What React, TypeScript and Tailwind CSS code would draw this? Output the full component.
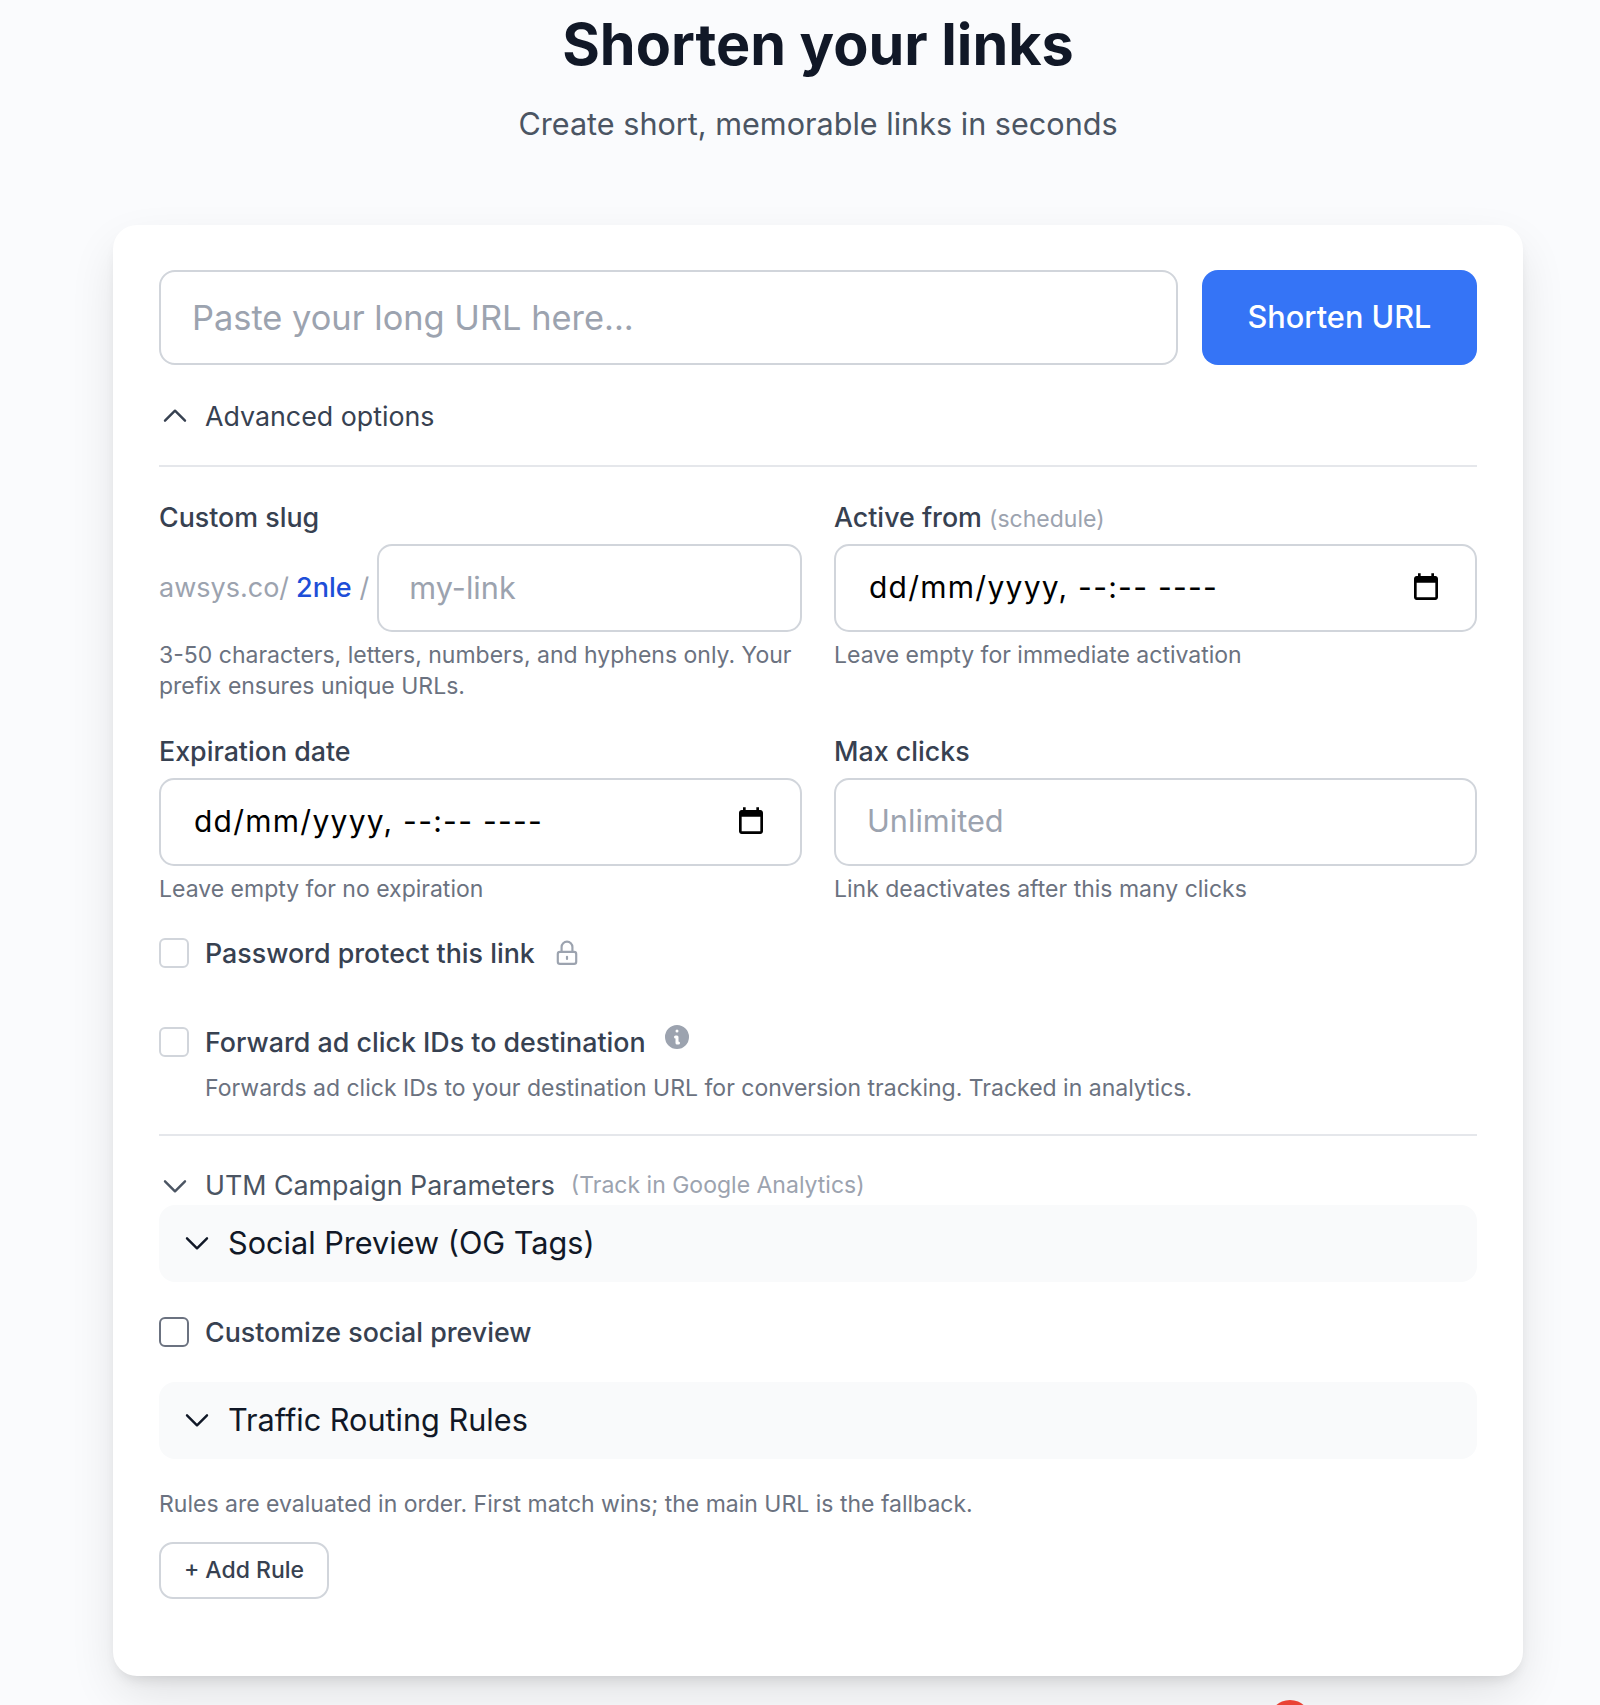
const ChevronUp = () => (
  <svg viewBox="0 0 24 24" className="h-[32px] w-[32px]" fill="none" stroke="#374151" strokeWidth="1.8" strokeLinecap="round" strokeLinejoin="round">
    <path d="M4.5 15.5 12 8l7.5 7.5" />
  </svg>
);

const ChevronDown = ({ color = '#4b5563' }: { color?: string }) => (
  <svg viewBox="0 0 24 24" className="h-[32px] w-[32px]" fill="none" stroke={color} strokeWidth="1.8" strokeLinecap="round" strokeLinejoin="round">
    <path d="M4.5 8.5 12 16l7.5-7.5" />
  </svg>
);

const CalendarIcon = () => (
  <svg viewBox="0 0 24 24" className="h-[32px] w-[32px]" fill="#000">
    <path d="M19 3h-1V1h-2v2H8V1H6v2H5C3.89 3 3.01 3.9 3.01 5L3 19c0 1.1.89 2 2 2h14c1.1 0 2-.9 2-2V5c0-1.1-.9-2-2-2zm0 16H5V8h14v11z" />
  </svg>
);

const LockIcon = () => (
  <svg viewBox="0 0 24 24" className="h-[26px] w-[26px]" fill="none" stroke="#9ca3af" strokeWidth="2" strokeLinecap="round" strokeLinejoin="round">
    <rect x="3.5" y="11" width="17" height="11" rx="2" />
    <path d="M7 11V6.5a5 5 0 0 1 10 0V11" />
    <path d="M12 15.5v2" />
  </svg>
);

const InfoIcon = () => (
  <svg viewBox="0 0 20 20" className="h-[30px] w-[30px]" fill="#9ca3af">
    <path fillRule="evenodd" clipRule="evenodd" d="M18 10a8 8 0 11-16 0 8 8 0 0116 0zm-7-4a1 1 0 11-2 0 1 1 0 012 0zM9 9a1 1 0 000 2v3a1 1 0 001 1h1a1 1 0 100-2v-3a1 1 0 00-1-1H9z" />
  </svg>
);

const DateField = () => (
  <div className="flex h-[88px] items-center justify-between rounded-[15px] border-2 border-[#d1d5db] bg-white pl-[33px] pr-[33px] text-[30px] tracking-[1.25px] text-black">
    <span className="pb-[2px]">dd/mm/yyyy, --:-- ----</span>
    <CalendarIcon />
  </div>
);

const Help = ({ children }: { children: React.ReactNode }) => (
  <p className="mt-[8px] text-[23px] leading-[30.5px] text-[#6b7280]">{children}</p>
);

const Label = ({ children }: { children: React.ReactNode }) => (
  <label className="mb-[11px] block h-[32px] text-[26.8px] font-medium leading-[32px] text-[#374151]">{children}</label>
);

const Check = ({ dark }: { dark?: boolean }) => (
  <input
    type="checkbox"
    className={`h-[30px] w-[30px] shrink-0 appearance-none rounded-[6px] border-2 bg-white ${dark ? 'border-[#6b7280]' : 'border-[#d1d5db]'}`}
  />
);

const Panel = ({ title }: { title: string }) => (
  <div className="flex h-[77px] items-center gap-[15px] rounded-[16px] bg-[#f9fafb] pl-[22px] text-[30.65px] text-[#111827]">
    <ChevronDown color="#111827" />
    {title}
  </div>
);

export default function App() {
  return (
    <div className="relative h-[1705px] w-[1600px] overflow-hidden bg-[#fafbfd] font-['Inter',sans-serif]">
      <div className="ml-[113px] w-[1410px]">
        <div className="flex h-[225px] flex-col items-center pt-[12px]">
          <h1 className="text-[57.5px] font-bold leading-[64px] text-[#111827]">Shorten your links</h1>
          <p className="mt-[28px] text-[30.6px] leading-[40px] text-[#4b5563]">Create short, memorable links in seconds</p>
        </div>

        <div className="h-[1451px] rounded-[24px] bg-white px-[46px] pt-[45px] shadow-[0_20px_50px_-6px_rgba(0,0,0,0.12),0_8px_14px_-6px_rgba(0,0,0,0.12)]">
          <div className="flex gap-[24px]">
            <input
              placeholder="Paste your long URL here..."
              className="h-[95px] min-w-0 flex-1 rounded-[16px] border-2 border-[#d1d5db] bg-white px-[31px] text-[34.4px] outline-none placeholder:text-[#9ca3af]"
            />
            <button className="h-[95px] w-[275px] rounded-[16px] bg-[#3574f6] text-[30.7px] font-medium text-white">Shorten URL</button>
          </div>

          <button className="mt-[35px] flex h-[32px] items-center gap-[14px] text-[26.8px] text-[#374151]">
            <ChevronUp />
            Advanced options
          </button>

          <div className="mt-[33px] border-t-2 border-[#e5e7eb]" />

          <div className="mt-[34px] grid grid-cols-2 gap-x-[32px] gap-y-[34px]">
            <div>
              <Label>Custom slug</Label>
              <div className="flex items-center">
                <span className="whitespace-nowrap text-[27px] text-[#9ca3af]">awsys.co/</span>
                <span className="ml-[7px] text-[27px] font-medium text-[#1d4ed8]">2nle</span>
                <span className="ml-[8px] text-[27px] text-[#9ca3af]">/</span>
                <input
                  placeholder="my-link"
                  className="ml-[8px] h-[88px] min-w-0 flex-1 rounded-[15px] border-2 border-[#d1d5db] bg-white px-[30px] pb-[2px] text-[30.7px] outline-none placeholder:text-[#9ca3af]"
                />
              </div>
              <Help>3-50 characters, letters, numbers, and hyphens only. Your prefix ensures unique URLs.</Help>
            </div>
            <div>
              <Label>
                Active from <span className="text-[23px] font-normal leading-none text-[#9ca3af]">(schedule)</span>
              </Label>
              <DateField />
              <Help>Leave empty for immediate activation</Help>
            </div>
            <div>
              <Label>Expiration date</Label>
              <DateField />
              <Help>Leave empty for no expiration</Help>
            </div>
            <div>
              <Label>Max clicks</Label>
              <input
                placeholder="Unlimited"
                className="h-[88px] w-full rounded-[15px] border-2 border-[#d1d5db] bg-white px-[31px] pb-[3px] text-[30.7px] outline-none placeholder:text-[#9ca3af]"
              />
              <Help>Link deactivates after this many clicks</Help>
            </div>
          </div>

          <div className="mt-[33px] flex items-center gap-[16px]">
            <Check />
            <span className="text-[26.8px] font-medium leading-[30px] text-[#374151]">Password protect this link</span>
            <span className="ml-[3px]"><LockIcon /></span>
          </div>

          <div className="mt-[59px] flex items-center gap-[16px]">
            <Check />
            <span className="text-[26.8px] font-medium leading-[30px] text-[#374151]">Forward ad click IDs to destination</span>
            <span className="-translate-y-[5px]"><InfoIcon /></span>
          </div>
          <p className="ml-[46px] mt-[16px] text-[23px] leading-[31px] text-[#6b7280]">
            Forwards ad click IDs to your destination URL for conversion tracking. Tracked in analytics.
          </p>

          <div className="mt-[30px] border-t-2 border-[#e5e7eb]" />

          <button className="mt-[33px] flex h-[34px] items-center gap-[14px] text-[26.8px] text-[#4b5563]">
            <ChevronDown />
            UTM Campaign Parameters
            <span className="ml-[2px] text-[23px] font-normal text-[#9ca3af]">(Track in Google Analytics)</span>
          </button>

          <div className="mt-[2px]">
            <Panel title="Social Preview (OG Tags)" />
          </div>

          <div className="mt-[35px] flex items-center gap-[16px]">
            <Check dark />
            <span className="text-[26.8px] font-medium leading-[30px] text-[#374151]">Customize social preview</span>
          </div>

          <div className="mt-[35px]">
            <Panel title="Traffic Routing Rules" />
          </div>

          <p className="mt-[30px] text-[23px] leading-[31px] text-[#6b7280]">
            Rules are evaluated in order. First match wins; the main URL is the fallback.
          </p>

          <button className="mt-[22px] h-[57px] w-[170px] rounded-[14px] border-2 border-[#d1d5db] bg-white text-[23px] font-medium text-[#374151]">
            + Add Rule
          </button>
        </div>
      </div>

      {/* notification dot, cut off by the bottom edge */}
      <div className="absolute left-[1269px] top-[1700px] h-[42px] w-[42px] rounded-full bg-[#ea4335]" />
    </div>
  );
}
